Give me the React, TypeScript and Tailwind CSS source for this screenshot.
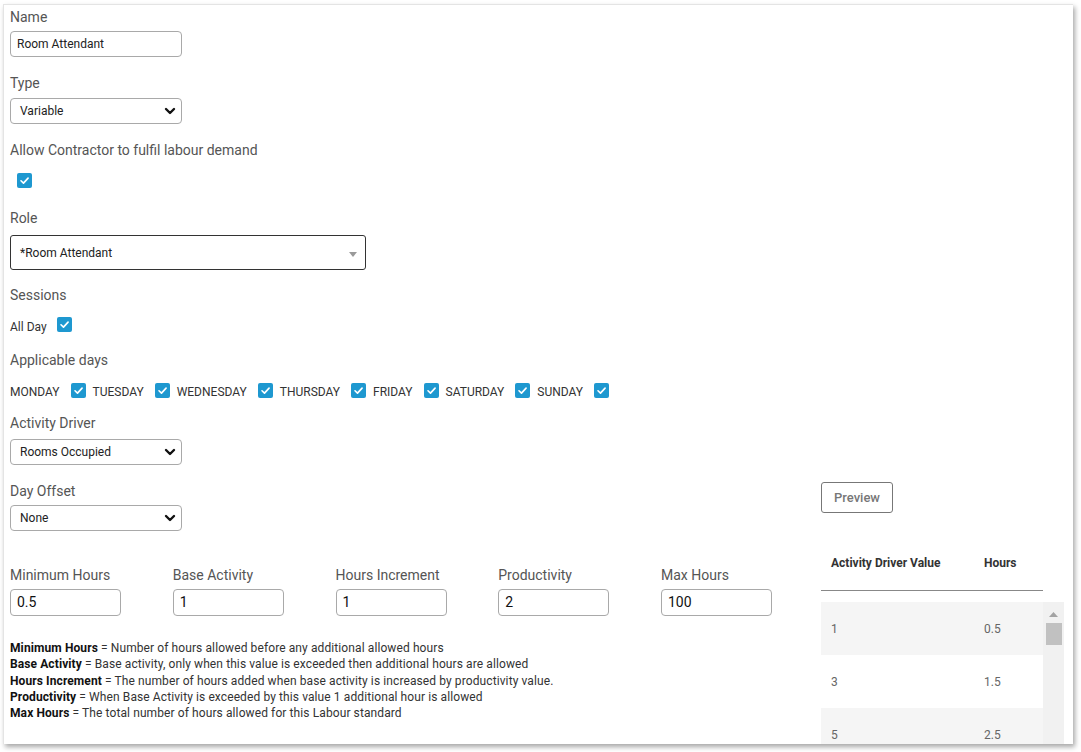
import React from "react";

const font = { fontFamily: "Roboto, 'Liberation Sans', Arial, sans-serif" };

function Check({ className = "" }: { className?: string }) {
  return (
    <span
      className={`inline-flex h-[15px] w-[15px] shrink-0 items-center justify-center rounded-[2px] bg-[#1e98d0] ${className}`}
    >
      <svg width="11" height="11" viewBox="0 0 12 12" fill="none">
        <path d="M2.2 6.3 L4.9 8.9 L9.9 3.4" stroke="white" strokeWidth="1.8" strokeLinecap="round" strokeLinejoin="round" />
      </svg>
    </span>
  );
}

function Chevron() {
  return (
    <svg width="12" height="12" viewBox="0 0 12 12" fill="none" className="absolute right-[5px] top-1/2 -translate-y-1/2">
      <path d="M2 4 L6 8 L10 4" stroke="#111" strokeWidth="2.4" strokeLinecap="round" strokeLinejoin="round" />
    </svg>
  );
}

function Label({ children, className = "" }: { children: React.ReactNode; className?: string }) {
  return <div className={`text-[14px] leading-[20px] text-[#555] ${className}`}>{children}</div>;
}

function Select({ value, className = "" }: { value: string; className?: string }) {
  return (
    <div
      className={`relative flex h-[26px] w-[172px] items-center rounded-[4px] border border-[#a9a9a9] pl-[9px] text-[12px] text-[#222] ${className}`}
    >
      {value}
      <Chevron />
    </div>
  );
}

const days = ["MONDAY", "TUESDAY", "WEDNESDAY", "THURSDAY", "FRIDAY", "SATURDAY", "SUNDAY"];

const numbers = [
  { l: "Minimum Hours", v: "0.5" },
  { l: "Base Activity", v: "1" },
  { l: "Hours Increment", v: "1" },
  { l: "Productivity", v: "2" },
  { l: "Max Hours", v: "100" },
];

const desc = [
  ["Minimum Hours", "Number of hours allowed before any additional allowed hours"],
  ["Base Activity", "Base activity, only when this value is exceeded then additional hours are allowed"],
  ["Hours Increment", "The number of hours added when base activity is increased by productivity value."],
  ["Productivity", "When Base Activity is exceeded by this value 1 additional hour is allowed"],
  ["Max Hours", "The total number of hours allowed for this Labour standard"],
];

const rows = [
  ["1", "0.5"],
  ["3", "1.5"],
  ["5", "2.5"],
];

export default function App() {
  return (
    <div className="h-[752px] w-[1081px] overflow-hidden bg-white" style={font}>
      <div className="ml-[3px] mt-[4px] h-[740px] w-[1070px] overflow-hidden border-l border-t border-[#e4e4e4] bg-white pl-[6px] pt-[2px] shadow-[2px_3px_5px_rgba(0,0,0,0.35)]">
        <Label>Name</Label>
        <div className="mt-[4px] flex h-[26px] w-[172px] items-center rounded-[4px] border border-[#a9a9a9] pl-[6px] text-[12px] text-[#222]">
          Room Attendant
        </div>

        <Label className="mt-[16px]">Type</Label>
        <Select value="Variable" className="mt-[5px]" />

        <Label className="mt-[16px]">Allow Contractor to fulfil labour demand</Label>
        <div className="mt-[13px] flex h-[15px] pl-[7px]">
          <Check />
        </div>

        <Label className="mt-[20px]">Role</Label>
        <div className="relative mt-[7px] flex h-[35px] w-[356px] items-center rounded-[3px] border border-[#333] pl-[9px] text-[12px] text-[#222]">
          *Room Attendant
          <svg width="8" height="5" viewBox="0 0 8 5" className="absolute right-[8px] top-[16px]">
            <path d="M0 0 L8 0 L4 5 Z" fill="#9a9a9a" />
          </svg>
        </div>

        <Label className="mt-[15px]">Sessions</Label>
        <div className="mt-[12px] flex h-[15px] items-center text-[12px] text-[#333]">
          <span className="mt-[5px]">All Day</span>
          <Check className="ml-[10px]" />
        </div>

        <Label className="mt-[18px]">Applicable days</Label>
        <div className="mt-[13px] flex h-[15px] items-center text-[12px] text-[#333]">
          {days.map((d) => (
            <React.Fragment key={d}>
              <span className="mt-[2px]">{d}</span>
              <Check className="ml-[11px] mr-[7px]" />
            </React.Fragment>
          ))}
        </div>

        <Label className="mt-[15px]">Activity Driver</Label>
        <Select value="Rooms Occupied" className="mt-[6px]" />

        <div className="flex">
          <div className="w-[811px]">
            <Label className="mt-[16px]">Day Offset</Label>
            <Select value="None" className="mt-[4px]" />

            <div className="mt-[34px] flex gap-[51.75px]">
              {numbers.map((n) => (
                <div key={n.l} className="w-[111px]">
                  <Label>{n.l}</Label>
                  <div className="mt-[4px] flex h-[27px] w-[111px] items-center rounded-[4px] border border-[#a9a9a9] pl-[6px] text-[14px] text-[#111]">
                    {n.v}
                  </div>
                </div>
              ))}
            </div>

            <div className="mt-[24px] text-[12px] leading-[16.3px] tracking-[0.1px] text-[#333]">
              {desc.map(([t, d]) => (
                <div key={t}>
                  <span className="font-bold text-[#111]">{t}</span> = {d}
                </div>
              ))}
            </div>
            <Label className="mt-[19px]">Max</Label>
          </div>

          <div className="w-[244px] pt-[17px]">
            <div className="flex h-[31px] w-[72px] items-center justify-center rounded-[3px] border border-[#777] text-[13px] font-medium text-[#777]">
              Preview
            </div>
            <div className="mt-[38px] flex h-[40px] w-[222px] items-center border-b border-[#888] pb-[16px] text-[12px] font-bold text-[#333]">
              <div className="w-[163px] pl-[10px]">Activity Driver Value</div>
              <div>Hours</div>
            </div>
            <div className="mt-[11px] flex">
              <div className="w-[222px] text-[12px] text-[#666]">
                {rows.map(([a, b], i) => (
                  <div key={a} className={`flex h-[53px] items-center ${i % 2 === 0 ? "bg-[#f5f5f5]" : "bg-white"}`}>
                    <div className="w-[163px] pl-[10px]">{a}</div>
                    <div>{b}</div>
                  </div>
                ))}
              </div>
              <div className="relative h-[160px] w-[21px] bg-[#f1f1f1]">
                <svg width="9" height="5" viewBox="0 0 9 5" className="absolute left-[6px] top-[10px]">
                  <path d="M0 5 L4.5 0 L9 5 Z" fill="#a3a3a3" />
                </svg>
                <div className="absolute left-[3px] top-[21px] h-[22px] w-[16px] bg-[#c1c1c1]" />
              </div>
            </div>
          </div>
        </div>
      </div>
    </div>
  );
}
